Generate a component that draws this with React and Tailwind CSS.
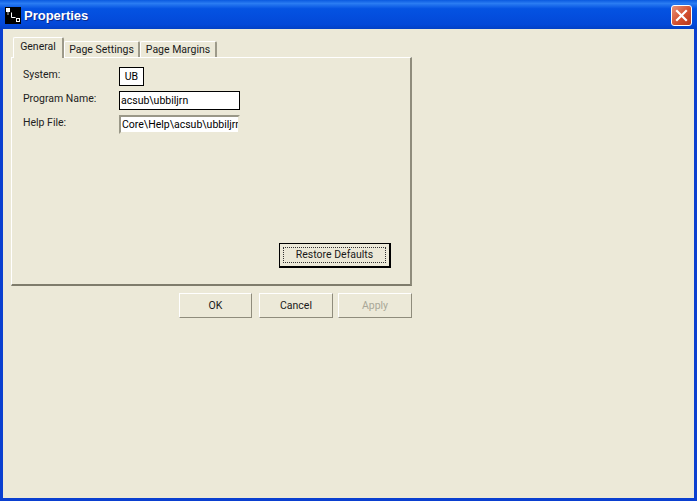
import React from 'react';

const font = "[font-family:Roboto,'Liberation_Sans',Arial,sans-serif]";

const AppIcon = () => (
  <svg width="16" height="17" viewBox="0 0 16 17" className="shrink-0">
    <rect x="0" y="0" width="16" height="17" fill="#000" />
    <rect x="1" y="1" width="4" height="4" fill="#fff" />
    <rect x="11" y="11" width="4" height="4" fill="#fff" />
    <rect x="12" y="12" width="2" height="2" fill="#000" />
    <path d="M6.5 5.5v5h4" stroke="#fff" strokeWidth="1" fill="none" />
    <path d="M3 5v3" stroke="#bbb" strokeWidth="1" />
  </svg>
);

const CloseButton = () => (
  <div className="w-[21px] h-[21px] rounded-[3px] border border-white bg-[linear-gradient(135deg,#e8937a,#d4502f_55%,#b8381c)] flex items-center justify-center">
    <svg width="13" height="13" viewBox="0 0 13 13">
      <path d="M2 2l9 9M11 2l-9 9" stroke="#fff" strokeWidth="2.2" strokeLinecap="square" />
    </svg>
  </div>
);

const Tab = ({ label, active, className }) => (
  <div
    className={`flex items-center justify-center border-t border-l border-white border-r-2 border-r-[#9d9a8a] rounded-t-[2px] bg-[#ece9d8] text-[#1a1a1a] ${className} ${
      active ? 'h-[21px] relative z-10 -mb-px pb-[2px]' : 'h-[16px]'
    }`}
  >
    {label}
  </div>
);

const Field = ({ label, value, boxClass }) => (
  <div className="flex h-[19px]">
    <div className="w-[96px] pt-px text-[#222] leading-[13px]">{label}</div>
    <div className={`h-[19px] bg-white flex items-center overflow-hidden whitespace-nowrap ${boxClass}`}>{value}</div>
  </div>
);

const Button = ({ label, className, disabled }) => (
  <div
    className={`h-[25px] flex items-center justify-center border border-t-white border-l-white border-r-[#8f8c7c] border-b-[#8f8c7c] bg-[#ece9d8] ${
      disabled ? 'text-[#a9a797]' : 'text-[#1a1a1a]'
    } ${className}`}
  >
    {label}
  </div>
);

const App = () => {
  return (
    <div className={`w-[697px] h-[501px] flex flex-col overflow-hidden text-[10.5px] bg-[#0a3fd0] ${font}`}>
      <div className="h-[29px] shrink-0 flex items-center pl-[5px] pr-[5px] pt-[2px] bg-[linear-gradient(180deg,#0a5ae0_0%,#2a7cf2_12%,#0453e2_30%,#0348d8_85%,#0340c4_100%)]">
        <AppIcon />
        <span className="ml-[3px] mt-px text-white font-bold text-[13px] [font-family:'Liberation_Sans',Arial,sans-serif] [text-shadow:1px_1px_0_#0a2a90]">Properties</span>
        <div className="ml-auto">
          <CloseButton />
        </div>
      </div>

      <div className="flex-1 mx-[3px] mb-[3px] bg-[#ece9d8] pl-[8px] pt-[8px]">
        <div className="w-[401px]">
          <div className="flex items-end pl-[2px] h-[20px]">
            <Tab label="General" active className="w-[51px]" />
            <Tab label="Page Settings" className="w-[76px]" />
            <Tab label="Page Margins" className="w-[77px]" />
          </div>
          <div className="h-[229px] border-t border-l border-white border-r-2 border-b-2 border-r-[#8f8c7c] border-b-[#7f7c6c] pl-[11px] pt-[9px] pr-[19px] flex flex-col">
            <div className="flex flex-col gap-[5px]">
              <Field label="System:" value="UB" boxClass="w-[25px] border border-black justify-center" />
              <Field label="Program Name:" value="acsub\ubbiljrn" boxClass="w-[121px] border border-black pl-[1px]" />
              <Field
                label="Help File:"
                value="Core\Help\acsub\ubbiljrn"
                boxClass="w-[121px] border-2 border-t-[#9a9888] border-l-[#9a9888] border-r-[#ece9d8] border-b-[#ece9d8] pl-[1px]"
              />
            </div>
            <div className="mt-[109px] flex justify-end">
              <div className="w-[112px] h-[25px] border border-r-2 border-b-2 border-black bg-[#ece9d8] p-[3px]">
                <div className="h-full border border-dotted border-[#333] flex items-center justify-center text-[#1a1a1a]">
                  Restore Defaults
                </div>
              </div>
            </div>
          </div>
          <div className="flex mt-[7px] pl-[168px]">
            <Button label="OK" className="w-[73px]" />
            <Button label="Cancel" className="w-[74px] ml-[7px]" />
            <Button label="Apply" disabled className="w-[74px] ml-[5px]" />
          </div>
        </div>
      </div>
    </div>
  );
};

export default App;
